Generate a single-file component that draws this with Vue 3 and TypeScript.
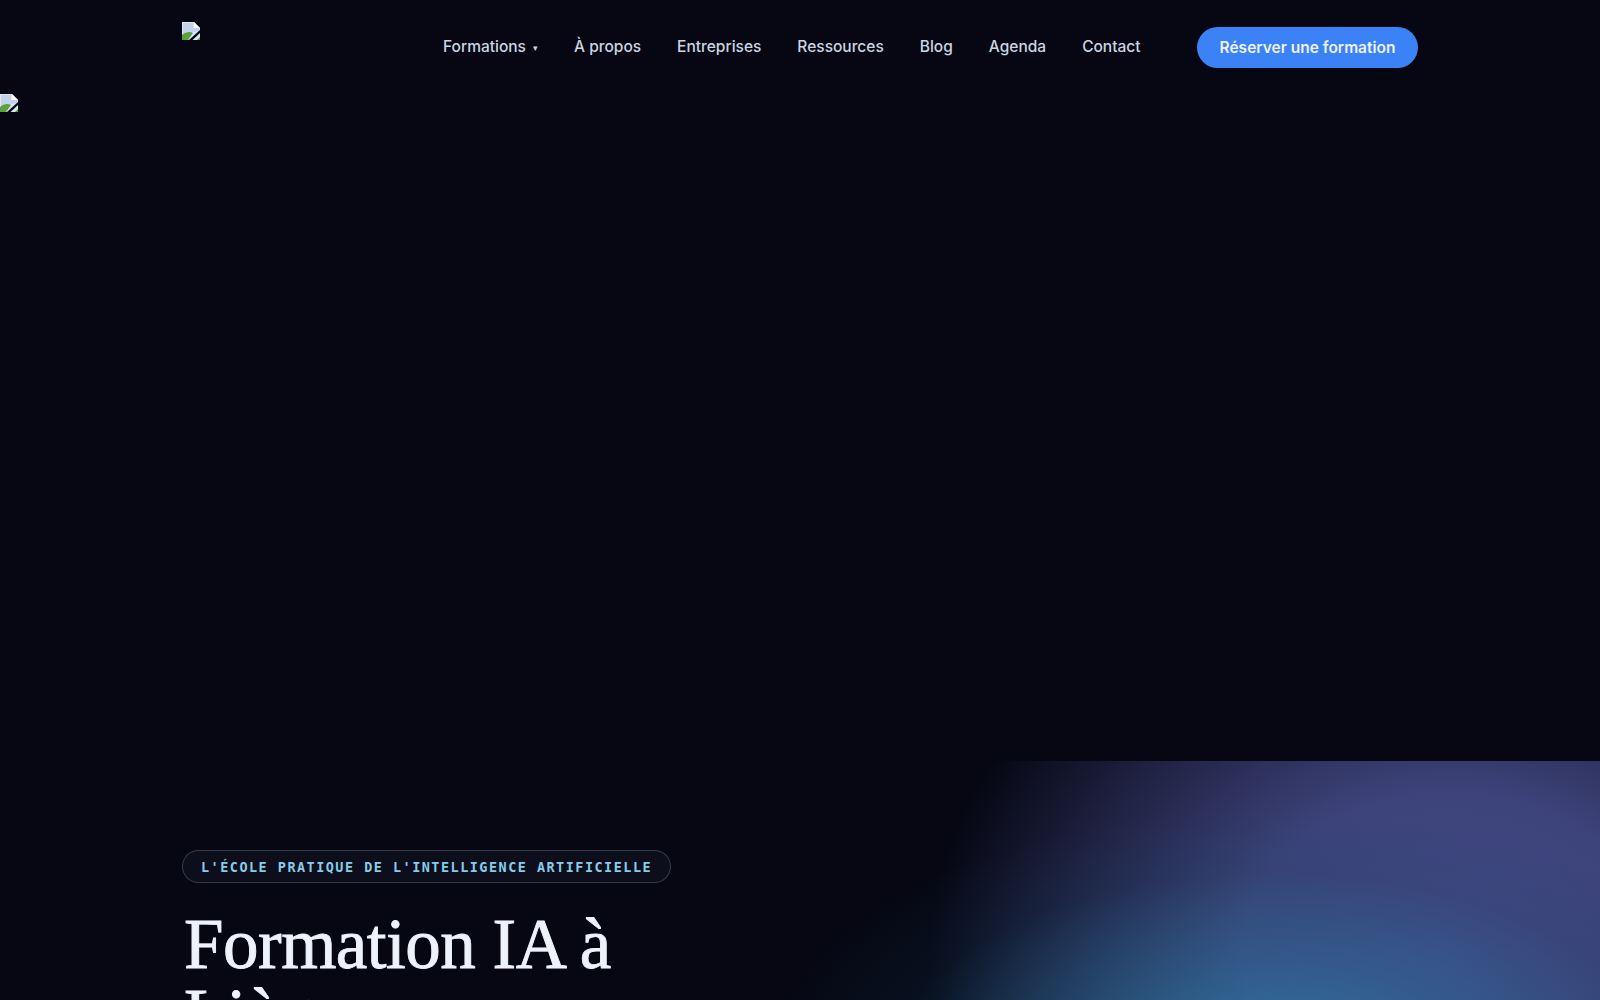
<script setup lang="ts">
const liens = ['À propos', 'Entreprises', 'Ressources', 'Blog', 'Agenda', 'Contact']
</script>

<template>
  <div class="page">
    <header class="header">
      <div class="header__inner">
        <a class="logo" href="#" aria-label="Accueil">
          <svg class="broken" width="18" height="18" viewBox="0 0 18 18">
            <path d="M0 0h12l6 6v12H0z" fill="#dfe6f2" />
            <path d="M1 1h10v5h6v3L1 12z" fill="#c3d3ee" />
            <path d="M12 0l6 6h-6z" fill="#fff" />
            <path d="M0 18v-5c3-3 8-4 11-2l-5 7z" fill="#5aa23c" />
            <path d="M15 18h3v-3z" fill="#5aa23c" />
            <path d="M7 18L18 8v3l-7.500 7z" fill="#060713" />
          </svg>
        </a>
        <nav class="nav">
          <a class="nav__link" href="#">Formations <span class="nav__caret">▾</span></a>
          <a v-for="lien in liens" :key="lien" class="nav__link" href="#">{{ lien }}</a>
        </nav>
        <a class="cta" href="#">Réserver une formation</a>
      </div>
    </header>

    <div class="banner">
      <svg class="broken" width="18" height="18" viewBox="0 0 18 18">
        <path d="M0 0h12l6 6v12H0z" fill="#dfe6f2" />
        <path d="M1 1h10v5h6v3L1 12z" fill="#c3d3ee" />
        <path d="M12 0l6 6h-6z" fill="#fff" />
        <path d="M0 18v-5c3-3 8-4 11-2l-5 7z" fill="#5aa23c" />
        <path d="M15 18h3v-3z" fill="#5aa23c" />
        <path d="M7 18L18 8v3l-7.500 7z" fill="#060713" />
      </svg>
    </div>

    <section class="hero">
      <div class="hero__inner">
        <span class="pill">L'ÉCOLE PRATIQUE DE L'INTELLIGENCE ARTIFICIELLE</span>
        <h1 class="hero__title">Formation IA à<br />Liège</h1>
      </div>
    </section>
  </div>
</template>

<style scoped>
.page {
  height: 1000px;
  overflow: hidden;
  background: #060713;
  font-family: Inter, "Liberation Sans", sans-serif;
}

.header__inner {
  max-width: 1236px;
  height: 94px;
  margin: 0 auto;
  display: flex;
  align-items: center;
}

.logo {
  align-self: flex-start;
  width: 261px;
  padding-top: 22px;
}

.broken { display: block; }

.nav {
  display: flex;
  gap: 36px;
  flex: 1;
  margin-top: -1px;
}

.nav__link {
  color: #cbd5e1;
  font-size: 15.5px;
  font-weight: 500;
  text-decoration: none;
}

.nav__caret {
  font-size: 9px;
  margin-left: 3px;
  vertical-align: 1px;
}

.cta {
  width: 221px;
  height: 41px;
  display: flex;
  align-items: center;
  justify-content: center;
  border-radius: 999px;
  background: #3b82f6;
  color: #eef2fb;
  font-size: 15.5px;
  font-weight: 600;
  text-decoration: none;
}

.banner { height: 667px; }

.hero {
  height: 239px;
  padding-top: 89px;
  background:
    radial-gradient(ellipse 500px 250px at 1270px 300px, rgba(45, 125, 165, 0.85), rgba(40, 110, 150, 0.5) 40%, rgba(15, 70, 100, 0.15) 75%, rgba(15, 70, 100, 0) 100%),
    radial-gradient(ellipse 520px 400px at 1450px 190px, #424884 0%, rgba(64, 70, 128, 0.95) 40%, rgba(52, 56, 104, 0.62) 70%, rgba(45, 48, 90, 0) 100%),
    #060713;
}

.hero__inner {
  max-width: 1236px;
  margin: 0 auto;
}

.pill {
  display: inline-block;
  padding: 9px 18px 7px;
  border: 1px solid rgba(148, 163, 184, 0.3);
  border-radius: 999px;
  background: rgba(148, 163, 184, 0.05);
  color: #86cdea;
  font-family: "DejaVu Sans Mono", monospace;
  font-size: 13.5px;
  font-weight: 700;
  letter-spacing: 1.47px;
  line-height: 15px;
}

.hero__title {
  margin: 26px 0 0 2px;
  color: #eef2fb;
  font-family: "Liberation Serif", serif;
  font-size: 71px;
  font-weight: 400;
  letter-spacing: -0.5px;
  line-height: 70px;
  -webkit-text-stroke: 0.9px #eef2fb;
}
</style>
